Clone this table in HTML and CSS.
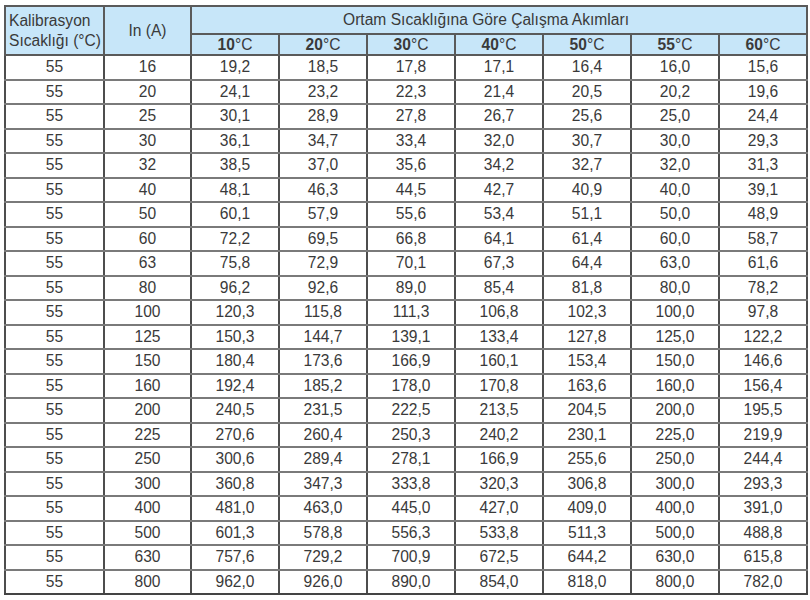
FILE: index.html
```html
<!DOCTYPE html>
<html lang="tr">
<head>
<meta charset="utf-8">
<title>Kalibrasyon</title>
<link rel="stylesheet" href="styles.css">
</head>
<body>
<table class="grid">
<colgroup>
<col class="c-cal"><col class="c-in">
<col class="c-t"><col class="c-t"><col class="c-t"><col class="c-t"><col class="c-t"><col class="c-t"><col class="c-t">
</colgroup>
<thead>
<tr class="h1">
<th rowspan="2" class="cal">Kalibrasyon<br>Sıcaklığı (°C)</th>
<th rowspan="2">In (A)</th>
<th colspan="7" class="group">Ortam Sıcaklığına Göre Çalışma Akımları</th>
</tr>
<tr class="h2">
<th><b>10</b>°C</th><th><b>20</b>°C</th><th><b>30</b>°C</th><th><b>40</b>°C</th><th><b>50</b>°C</th><th><b>55</b>°C</th><th><b>60</b>°C</th>
</tr>
</thead>
<tbody>
<tr><td>55</td><td>16</td><td>19,2</td><td>18,5</td><td>17,8</td><td>17,1</td><td>16,4</td><td>16,0</td><td>15,6</td></tr>
<tr><td>55</td><td>20</td><td>24,1</td><td>23,2</td><td>22,3</td><td>21,4</td><td>20,5</td><td>20,2</td><td>19,6</td></tr>
<tr><td>55</td><td>25</td><td>30,1</td><td>28,9</td><td>27,8</td><td>26,7</td><td>25,6</td><td>25,0</td><td>24,4</td></tr>
<tr><td>55</td><td>30</td><td>36,1</td><td>34,7</td><td>33,4</td><td>32,0</td><td>30,7</td><td>30,0</td><td>29,3</td></tr>
<tr><td>55</td><td>32</td><td>38,5</td><td>37,0</td><td>35,6</td><td>34,2</td><td>32,7</td><td>32,0</td><td>31,3</td></tr>
<tr><td>55</td><td>40</td><td>48,1</td><td>46,3</td><td>44,5</td><td>42,7</td><td>40,9</td><td>40,0</td><td>39,1</td></tr>
<tr><td>55</td><td>50</td><td>60,1</td><td>57,9</td><td>55,6</td><td>53,4</td><td>51,1</td><td>50,0</td><td>48,9</td></tr>
<tr><td>55</td><td>60</td><td>72,2</td><td>69,5</td><td>66,8</td><td>64,1</td><td>61,4</td><td>60,0</td><td>58,7</td></tr>
<tr><td>55</td><td>63</td><td>75,8</td><td>72,9</td><td>70,1</td><td>67,3</td><td>64,4</td><td>63,0</td><td>61,6</td></tr>
<tr><td>55</td><td>80</td><td>96,2</td><td>92,6</td><td>89,0</td><td>85,4</td><td>81,8</td><td>80,0</td><td>78,2</td></tr>
<tr><td>55</td><td>100</td><td>120,3</td><td>115,8</td><td>111,3</td><td>106,8</td><td>102,3</td><td>100,0</td><td>97,8</td></tr>
<tr><td>55</td><td>125</td><td>150,3</td><td>144,7</td><td>139,1</td><td>133,4</td><td>127,8</td><td>125,0</td><td>122,2</td></tr>
<tr><td>55</td><td>150</td><td>180,4</td><td>173,6</td><td>166,9</td><td>160,1</td><td>153,4</td><td>150,0</td><td>146,6</td></tr>
<tr><td>55</td><td>160</td><td>192,4</td><td>185,2</td><td>178,0</td><td>170,8</td><td>163,6</td><td>160,0</td><td>156,4</td></tr>
<tr><td>55</td><td>200</td><td>240,5</td><td>231,5</td><td>222,5</td><td>213,5</td><td>204,5</td><td>200,0</td><td>195,5</td></tr>
<tr><td>55</td><td>225</td><td>270,6</td><td>260,4</td><td>250,3</td><td>240,2</td><td>230,1</td><td>225,0</td><td>219,9</td></tr>
<tr><td>55</td><td>250</td><td>300,6</td><td>289,4</td><td>278,1</td><td>166,9</td><td>255,6</td><td>250,0</td><td>244,4</td></tr>
<tr><td>55</td><td>300</td><td>360,8</td><td>347,3</td><td>333,8</td><td>320,3</td><td>306,8</td><td>300,0</td><td>293,3</td></tr>
<tr><td>55</td><td>400</td><td>481,0</td><td>463,0</td><td>445,0</td><td>427,0</td><td>409,0</td><td>400,0</td><td>391,0</td></tr>
<tr><td>55</td><td>500</td><td>601,3</td><td>578,8</td><td>556,3</td><td>533,8</td><td>511,3</td><td>500,0</td><td>488,8</td></tr>
<tr><td>55</td><td>630</td><td>757,6</td><td>729,2</td><td>700,9</td><td>672,5</td><td>644,2</td><td>630,0</td><td>615,8</td></tr>
<tr><td>55</td><td>800</td><td>962,0</td><td>926,0</td><td>890,0</td><td>854,0</td><td>818,0</td><td>800,0</td><td>782,0</td></tr>
</tbody>
</table>
</body>
</html>
```
FILE: styles.css
```css
html, body {
  margin: 0;
  padding: 0;
  background: #ffffff;
}
body {
  padding: 5px 0 0 4px;
  font-family: "Liberation Sans", Arial, sans-serif;
  color: #3a3a3a;
}
.grid {
  border-collapse: collapse;
  table-layout: fixed;
  width: 802px;
  font-size: 15.6px;
  border: 2px solid #444444;
}
.c-cal { width: 99px; }
.c-in { width: 87px; }
.c-t { width: 88px; }
.grid th {
  background: #c7e6f9;
  font-weight: normal;
  border: 2px solid #5a5a5a;
  padding: 0;
  text-align: center;
  line-height: 18px;
}
.grid th b {
  font-weight: bold;
}
.grid th.cal {
  text-align: left;
  padding-left: 3px;
  line-height: 20px;
  padding-top: 1px;
}
.grid th.group {
  padding-right: 26px;
}
.h1 { height: 28px; }
.h2 { height: 21px; }
.grid td {
  border-left: 2px solid #4d4d4d;
  border-right: 2px solid #4d4d4d;
  border-bottom: 2px solid #7a7a7a;
  text-align: center;
  padding: 0;
  height: 22.5px;
  line-height: 18px;
}
.grid tbody tr:last-child td {
  border-bottom: 2px solid #444444;
}
```
